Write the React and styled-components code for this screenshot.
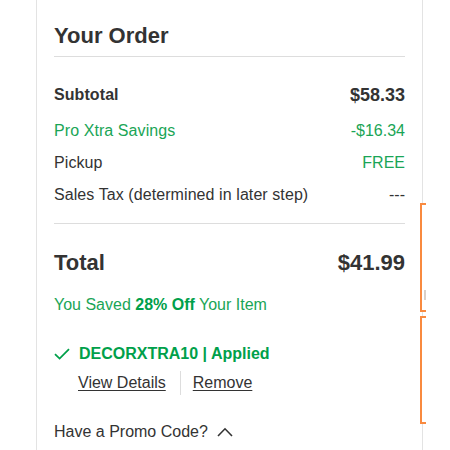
import React from "react";
import styled, { createGlobalStyle } from "styled-components";

const GlobalStyle = createGlobalStyle`
    html, body {
        margin: 0;
        padding: 0;
        background: #ffffff;
        font-family: "Liberation Sans", Arial, sans-serif;
        color: #333333;
    }
`;

const Page = styled.div`
    display: flex;
    align-items: flex-start;
    padding-left: 36px;
    height: 450px;
    overflow: hidden;
`;

const Card = styled.section`
    width: 387px;
    box-sizing: border-box;
    min-height: 450px;
    padding: 22px 17px 0 17px;
    border-left: 1px solid #e3e3e3;
    border-right: 1px solid #e3e3e3;
    background: #fff;
`;

const Heading = styled.h2`
    margin: 0;
    font-size: 22px;
    line-height: 28px;
    font-weight: 700;
    color: #333;
    padding-bottom: 6px;
    border-bottom: 1px solid #dddddd;
`;

const Rows = styled.div`
    display: flex;
    flex-direction: column;
    gap: 8px;
    padding: 26px 0 16px;
    border-bottom: 1px solid #dddddd;
`;

const Row = styled.div`
    display: flex;
    justify-content: space-between;
    align-items: center;
    font-size: 16px;
    line-height: 24px;
    color: ${(p) => (p.$green ? "#1aa556" : "#333")};
    margin-bottom: ${(p) => (p.$spaced ? "4px" : "0")};
`;

const Label = styled.span`
    font-weight: ${(p) => (p.$bold ? 700 : 400)};
    letter-spacing: 0.08px;
`;

const Amount = styled.span`
    font-weight: ${(p) => (p.$bold ? 700 : 400)};
    font-size: ${(p) => p.$size || "16px"};
    color: ${(p) => (p.$green ? "#1aa556" : "inherit")};
`;

const TotalRow = styled.div`
    display: flex;
    justify-content: space-between;
    align-items: center;
    margin-top: 25px;
    font-size: 22px;
    line-height: 28px;
    font-weight: 700;
    color: #333;
`;

const Saved = styled.p`
    margin: 16px 0 0;
    font-size: 16px;
    line-height: 24px;
    color: #1aa556;

    strong {
        font-weight: 700;
        color: #00a04a;
    }
`;

const Promo = styled.div`
    margin-top: 25px;
`;

const Applied = styled.div`
    display: flex;
    align-items: center;
    gap: 9px;
    font-size: 16px;
    line-height: 24px;
    font-weight: 700;
    color: #00a04a;
`;

const Links = styled.div`
    display: flex;
    margin: 5px 0 0 24px;
`;

const TextLink = styled.a`
    font-size: 16px;
    line-height: 24px;
    color: #333;
    text-decoration: underline;
    text-underline-offset: 2px;
    cursor: pointer;
    padding: ${(p) => (p.$divided ? "0 0 0 12px" : "0 14px 0 0")};
    border-left: ${(p) => (p.$divided ? "1px solid #dddddd" : "none")};
`;

const PromoToggle = styled.button`
    display: flex;
    align-items: center;
    gap: 9px;
    margin-top: 25px;
    padding: 0;
    border: none;
    background: none;
    font-family: inherit;
    font-size: 16px;
    line-height: 24px;
    color: #333;
    cursor: pointer;
`;

const SideRail = styled.div`
    width: 6px;
    margin-left: -3px;
    padding-top: 203px;
    overflow: hidden;
    display: flex;
    flex-direction: column;
    gap: 4px;
`;

const SideBox = styled.div`
    position: relative;
    width: 120px;
    height: ${(p) => p.$h}px;
    box-sizing: border-box;
    border: 2px solid #f98a3f;
    background: #fff;
`;

const SideNub = styled.span`
    position: absolute;
    left: 2px;
    top: 85px;
    width: 3px;
    height: 10px;
    background: #d9cfc7;
`;

const Check = () => (
    <svg width="16" height="12" viewBox="0 0 16 12" fill="none">
        <path d="M1 6.2 L5.6 10.6 L15 1.2" stroke="#00a04a" strokeWidth="1.8" />
    </svg>
);

const ChevronUp = () => (
    <svg width="16" height="10" viewBox="0 0 16 10" fill="none">
        <path d="M1 9 L8 1.8 L15 9" stroke="#333" strokeWidth="1.6" />
    </svg>
);

const App = () => {
    return (
        <>
            <GlobalStyle />
            <Page>
                <Card>
                    <Heading>Your Order</Heading>
                    <Rows>
                        <Row $spaced>
                            <Label $bold>Subtotal</Label>
                            <Amount $bold $size="18px">$58.33</Amount>
                        </Row>
                        <Row $green>
                            <Label>Pro Xtra Savings</Label>
                            <Amount>-$16.34</Amount>
                        </Row>
                        <Row>
                            <Label>Pickup</Label>
                            <Amount $green>FREE</Amount>
                        </Row>
                        <Row>
                            <Label>Sales Tax (determined in later step)</Label>
                            <Amount>---</Amount>
                        </Row>
                    </Rows>
                    <TotalRow>
                        <span>Total</span>
                        <span>$41.99</span>
                    </TotalRow>
                    <Saved>
                        You Saved <strong>28% Off</strong> Your Item
                    </Saved>
                    <Promo>
                        <Applied>
                            <Check />
                            <span>DECORXTRA10 | Applied</span>
                        </Applied>
                        <Links>
                            <TextLink>View Details</TextLink>
                            <TextLink $divided>Remove</TextLink>
                        </Links>
                    </Promo>
                    <PromoToggle>
                        Have a Promo Code? <ChevronUp />
                    </PromoToggle>
                </Card>
                <SideRail>
                    <SideBox $h={109}>
                        <SideNub />
                    </SideBox>
                    <SideBox $h={108} />
                </SideRail>
            </Page>
        </>
    );
};

export default App;
